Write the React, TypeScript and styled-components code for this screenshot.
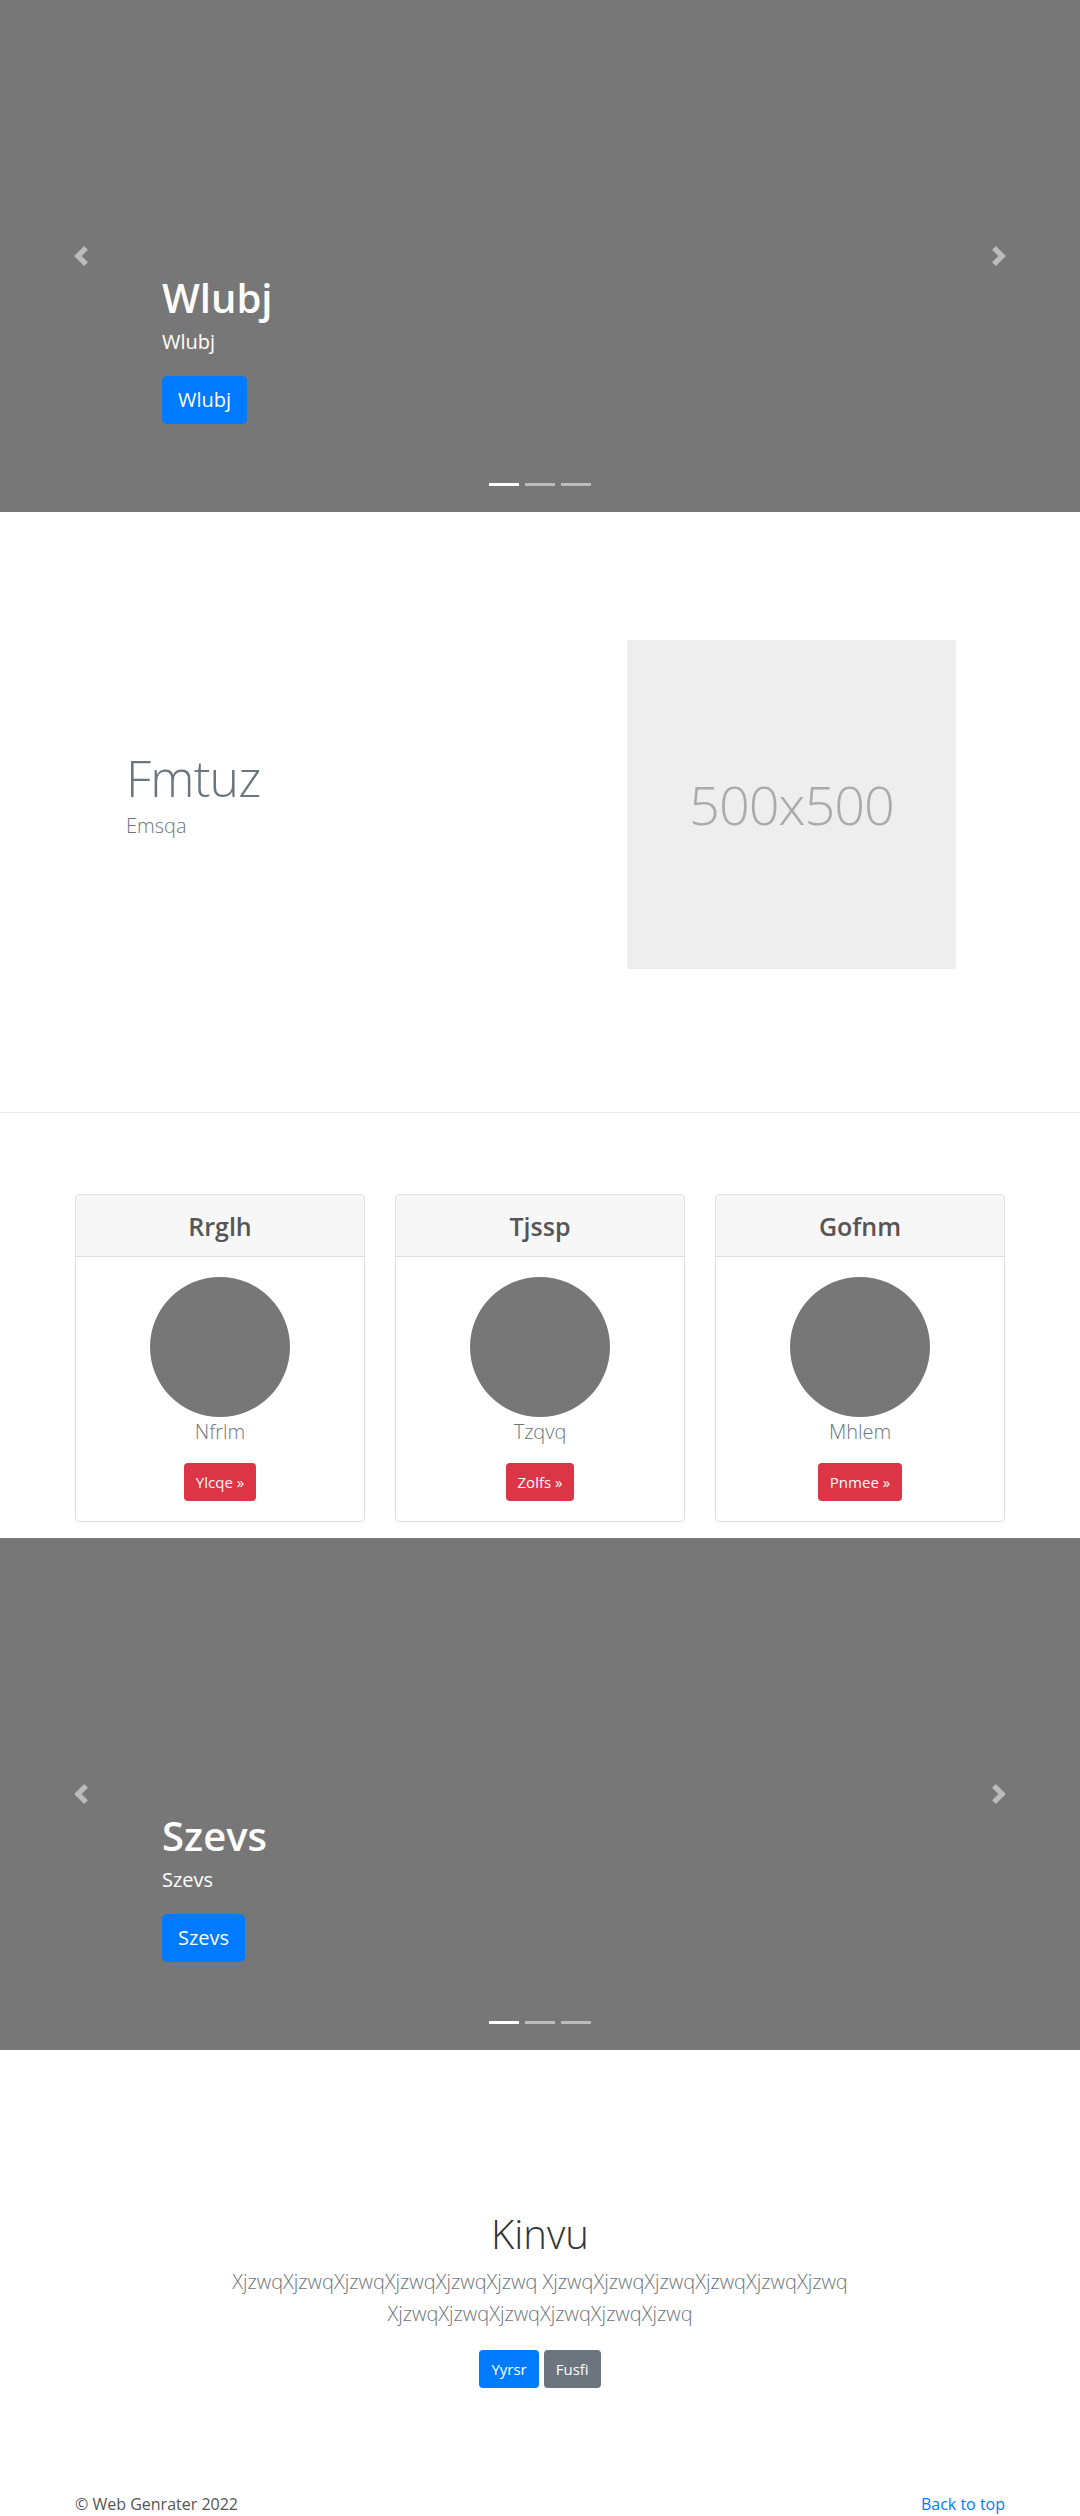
import React from "react";
import styled, { createGlobalStyle } from "styled-components";

const GlobalStyle = createGlobalStyle`
  html, body {
    margin: 0;
    padding: 0;
  }
  body {
    font-family: "Open Sans", "Noto Sans", "DejaVu Sans", sans-serif;
    font-size: 16px;
    line-height: 1.5;
    color: #212529;
    background: #fff;
  }
  * { box-sizing: border-box; }
`;

/* ---------- Carousel ---------- */

const Hero = styled.section`
  position: relative;
  height: 512px;
  background: #777777;
  overflow: hidden;
`;

const Control = styled.a<{ $side: "left" | "right" }>`
  position: absolute;
  top: 0;
  bottom: 0;
  ${(p) => p.$side}: 0;
  width: 15%;
  display: flex;
  align-items: center;
  justify-content: center;
  opacity: 0.5;
  cursor: pointer;
`;

const Caption = styled.div`
  position: absolute;
  left: 15%;
  right: 15%;
  bottom: 88px;
  color: #fff;
  text-align: left;
`;

const HeroTitle = styled.h1`
  margin: 0 0 5px;
  font-size: 40px;
  line-height: 1.2;
  font-weight: 600;
`;

const HeroText = styled.p`
  margin: 0 0 19px;
  font-size: 20px;
  line-height: 30px;
`;

const Button = styled.a<{ $variant: "primary" | "secondary" | "danger"; $size?: "lg" | "md" }>`
  display: inline-flex;
  align-items: center;
  justify-content: center;
  height: ${(p) => (p.$size === "lg" ? "48px" : "38px")};
  padding: 0 ${(p) => (p.$size === "lg" ? "16px" : "12px")};
  font-size: ${(p) => (p.$size === "lg" ? "20px" : "15px")};
  border-radius: ${(p) => (p.$size === "lg" ? "5px" : "4px")};
  color: #fff;
  text-decoration: none;
  background: ${(p) =>
    p.$variant === "primary" ? "#007bff" : p.$variant === "danger" ? "#dc3545" : "#6c757d"};
  cursor: pointer;
`;

const Indicators = styled.ol`
  position: absolute;
  left: 0;
  right: 0;
  bottom: 26px;
  margin: 0;
  padding: 0;
  list-style: none;
  display: flex;
  justify-content: center;
  gap: 6px;
`;

const Indicator = styled.li<{ $active?: boolean }>`
  width: 30px;
  height: 3px;
  background: #fff;
  opacity: ${(p) => (p.$active ? 1 : 0.5)};
`;

const Chevron = ({ dir }: { dir: "prev" | "next" }) => (
  <svg width="20" height="20" viewBox="0 0 8 8" fill="#fff">
    {dir === "prev" ? (
      <path d="M5.25 0l-4 4 4 4 1.5-1.5L4.25 4l2.5-2.5L5.25 0z" />
    ) : (
      <path d="M2.75 0l-1.5 1.5L3.75 4l-2.5 2.5L2.75 8l4-4-4-4z" />
    )}
  </svg>
);

const Carousel = ({ title }: { title: string }) => (
  <Hero>
    <Control $side="left">
      <Chevron dir="prev" />
    </Control>
    <Control $side="right">
      <Chevron dir="next" />
    </Control>
    <Caption>
      <HeroTitle>{title}</HeroTitle>
      <HeroText>{title}</HeroText>
      <Button $variant="primary" $size="lg">
        {title}
      </Button>
    </Caption>
    <Indicators>
      <Indicator $active />
      <Indicator />
      <Indicator />
    </Indicators>
  </Hero>
);

/* ---------- Featurette ---------- */

const Container = styled.div`
  width: 930px;
  margin: 0 auto;
`;

const FeatureSection = styled.section`
  padding: 128px 0 143px;
`;

const FeatureRow = styled.div`
  display: flex;
  align-items: center;
  padding: 0 49px 0 51px;
`;

const FeatureText = styled.div`
  flex: 1;
`;

const FeatureHeading = styled.h2`
  margin: 0 0 8px;
  font-size: 50px;
  line-height: 1;
  font-weight: 300;
  letter-spacing: -0.8px;
  color: #6c757d;
`;

const Lead = styled.p`
  margin: 0 0 16px;
  font-size: 20px;
  line-height: 30px;
  font-weight: 300;
  color: #6c757d;
`;

const Placeholder = styled.div`
  width: 329px;
  height: 329px;
  background: #eeeeee;
  display: flex;
  align-items: center;
  justify-content: center;
  color: #aaaaaa;
  font-size: 54px;
  font-weight: 300;
  letter-spacing: -1px;
`;

const Divider = styled.hr`
  margin: 0;
  border: 0;
  height: 1px;
  background: #e6e6e6;
`;

/* ---------- Cards ---------- */

const CardSection = styled.section`
  padding: 81px 0 16px;
`;

const CardGrid = styled.div`
  display: grid;
  grid-template-columns: repeat(3, 1fr);
  gap: 30px;
`;

const Card = styled.div`
  border: 1px solid #dfdfdf;
  border-radius: 4px;
  overflow: hidden;
  text-align: center;
`;

const CardHeader = styled.div`
  height: 62px;
  background: #f7f7f7;
  border-bottom: 1px solid #dfdfdf;
  display: flex;
  align-items: center;
  justify-content: center;
`;

const CardTitle = styled.h4`
  margin: 0;
  font-size: 25px;
  font-weight: 600;
  line-height: 1.2;
  color: #555555;
`;

const CardBody = styled.div`
  padding: 20px;
  display: flex;
  flex-direction: column;
  align-items: center;
`;

const Avatar = styled.div`
  width: 140px;
  height: 140px;
  border-radius: 50%;
  background: #777777;
`;

const CardLabel = styled.p`
  margin: 0 0 16px;
  font-size: 20px;
  line-height: 30px;
  font-weight: 300;
  color: #6c757d;
`;

/* ---------- Jumbotron ---------- */

const Jumbo = styled.section`
  padding: 160px 0 104px;
  text-align: center;
`;

const JumboTitle = styled.h1`
  margin: 0 0 8px;
  font-size: 40px;
  line-height: 48px;
  font-weight: 300;
  color: #333333;
`;

const JumboText = styled.p`
  max-width: 680px;
  margin: 0 auto 20px;
  font-size: 20px;
  line-height: 32px;
  font-weight: 300;
  color: #6c757d;
`;

const ButtonRow = styled.div`
  display: flex;
  justify-content: center;
  gap: 5px;
`;

/* ---------- Footer ---------- */

const Footer = styled.footer`
  display: flex;
  justify-content: space-between;
  align-items: center;
  height: 24px;
  font-size: 16px;
  line-height: 24px;
  color: #555555;
`;

const FooterLink = styled.a`
  color: #007bff;
  text-decoration: none;
`;

const cards = [
  { title: "Rrglh", label: "Nfrlm", btn: "Ylcqe »" },
  { title: "Tjssp", label: "Tzqvq", btn: "Zolfs »" },
  { title: "Gofnm", label: "Mhlem", btn: "Pnmee »" },
];

export default function App() {
  return (
    <>
      <GlobalStyle />
      <Carousel title="Wlubj" />

      <FeatureSection>
        <Container>
          <FeatureRow>
            <FeatureText>
              <FeatureHeading>Fmtuz</FeatureHeading>
              <Lead>Emsqa</Lead>
            </FeatureText>
            <Placeholder>500x500</Placeholder>
          </FeatureRow>
        </Container>
      </FeatureSection>

      <Divider />

      <CardSection>
        <Container>
          <CardGrid>
            {cards.map((c) => (
              <Card key={c.title}>
                <CardHeader>
                  <CardTitle>{c.title}</CardTitle>
                </CardHeader>
                <CardBody>
                  <Avatar />
                  <CardLabel>{c.label}</CardLabel>
                  <Button $variant="danger">{c.btn}</Button>
                </CardBody>
              </Card>
            ))}
          </CardGrid>
        </Container>
      </CardSection>

      <Carousel title="Szevs" />

      <Jumbo>
        <Container>
          <JumboTitle>Kinvu</JumboTitle>
          <JumboText>
            XjzwqXjzwqXjzwqXjzwqXjzwqXjzwq XjzwqXjzwqXjzwqXjzwqXjzwqXjzwq XjzwqXjzwqXjzwqXjzwqXjzwqXjzwq
          </JumboText>
          <ButtonRow>
            <Button $variant="primary">Yyrsr</Button>
            <Button $variant="secondary">Fusfi</Button>
          </ButtonRow>
        </Container>
      </Jumbo>

      <Container>
        <Footer>
          <span>© Web Genrater 2022</span>
          <FooterLink>Back to top</FooterLink>
        </Footer>
      </Container>
    </>
  );
}
